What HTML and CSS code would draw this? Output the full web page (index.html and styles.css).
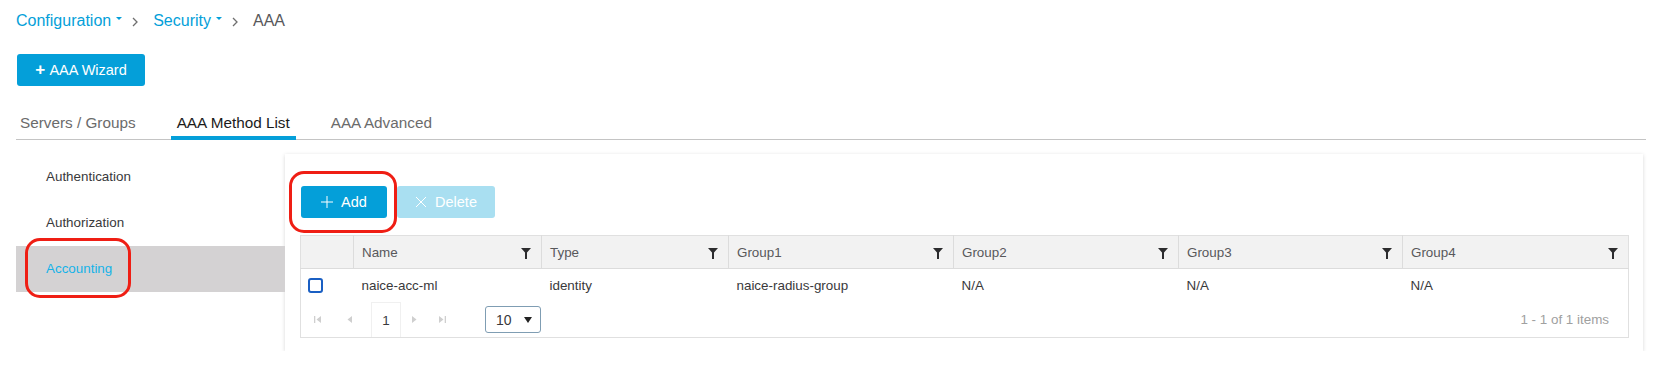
FILE: index.html
```html
<!DOCTYPE html>
<html lang="en">
<head>
	<meta charset="utf-8">
	<meta name="viewport" content="width=device-width, initial-scale=1.0">
	<link rel="stylesheet" href="styles.css">
</head>
<body>
	<div class="page">
		<div class="breadcrumb">
			<a class="crumb">Configuration<span class="caret"></span></a>
			<svg class="sep" viewBox="0 0 6 10"><path d="M1 1L5 5L1 9"/></svg>
			<a class="crumb">Security<span class="caret"></span></a>
			<svg class="sep" viewBox="0 0 6 10"><path d="M1 1L5 5L1 9"/></svg>
			<span class="current">AAA</span>
		</div>

		<button class="wizard-btn"><b>+</b> AAA Wizard</button>

		<div class="tabs">
			<div class="tab">Servers / Groups</div>
			<div class="tab active">AAA Method List</div>
			<div class="tab">AAA Advanced</div>
		</div>

		<div class="content">
			<div class="side-nav">
				<div class="nav-item">Authentication</div>
				<div class="nav-item">Authorization</div>
				<div class="nav-item selected">Accounting<span class="mark mark-nav"></span></div>
			</div>

			<div class="panel">
				<div class="toolbar">
					<button class="btn btn-add">
						<svg class="btn-icon" viewBox="0 0 12 12"><path d="M6 0V12M0 6H12" stroke="#fff" stroke-width="1"/></svg>
						Add
						<span class="mark mark-add"></span>
					</button>
					<button class="btn btn-delete">
						<svg class="btn-icon" viewBox="0 0 12 12"><path d="M1 1L11 11M11 1L1 11" stroke="#fff" stroke-width="1"/></svg>
						Delete
					</button>
				</div>

				<table class="grid">
					<colgroup>
						<col style="width:53px">
						<col style="width:188px">
						<col style="width:187px">
						<col style="width:225px">
						<col style="width:225px">
						<col style="width:224px">
						<col style="width:226px">
					</colgroup>
					<thead>
						<tr>
							<th></th>
							<th>Name<svg class="funnel" viewBox="0 0 10 11"><path d="M0 0H10L6 4.5V11H4V4.5Z"/></svg></th>
							<th>Type<svg class="funnel" viewBox="0 0 10 11"><path d="M0 0H10L6 4.5V11H4V4.5Z"/></svg></th>
							<th>Group1<svg class="funnel" viewBox="0 0 10 11"><path d="M0 0H10L6 4.5V11H4V4.5Z"/></svg></th>
							<th>Group2<svg class="funnel" viewBox="0 0 10 11"><path d="M0 0H10L6 4.5V11H4V4.5Z"/></svg></th>
							<th>Group3<svg class="funnel" viewBox="0 0 10 11"><path d="M0 0H10L6 4.5V11H4V4.5Z"/></svg></th>
							<th>Group4<svg class="funnel" viewBox="0 0 10 11"><path d="M0 0H10L6 4.5V11H4V4.5Z"/></svg></th>
						</tr>
					</thead>
					<tbody>
						<tr>
							<td><span class="check"></span></td>
							<td>naice-acc-ml</td>
							<td>identity</td>
							<td>naice-radius-group</td>
							<td>N/A</td>
							<td>N/A</td>
							<td>N/A</td>
						</tr>
					</tbody>
					<tfoot>
						<tr>
							<td colspan="7">
								<div class="pager">
									<svg class="pg-icon pg-first" viewBox="0 0 7 7"><path d="M0 0H1.3V7H0ZM7 0V7L2.5 3.5Z"/></svg>
									<svg class="pg-icon pg-prev" viewBox="0 0 7 7"><path d="M6 0V7L1.5 3.5Z"/></svg>
									<span class="pg-num">1</span>
									<svg class="pg-icon pg-next" viewBox="0 0 7 7"><path d="M1 0V7L5.5 3.5Z"/></svg>
									<svg class="pg-icon pg-last" viewBox="0 0 7 7"><path d="M0 0V7L4.5 3.5ZM5.7 0H7V7H5.7Z"/></svg>
									<div class="pg-size">10<span class="pg-arrow"></span></div>
									<span class="pg-info">1 - 1 of 1 items</span>
								</div>
							</td>
						</tr>
					</tfoot>
				</table>
			</div>
		</div>
	</div>
</body>
</html>
```

FILE: styles.css
```css
body {
	margin: 0;
	background: #fff;
	font-family: "Liberation Sans", Arial, sans-serif;
	color: #39393b;
}
.page {
	padding: 12px 13px 0 16px;
}
.breadcrumb {
	display: flex;
	align-items: center;
	height: 18px;
	font-size: 16px;
	line-height: 18px;
}
.crumb {
	color: #049fd9;
	display: flex;
	align-items: center;
}
.caret {
	display: inline-block;
	width: 0;
	height: 0;
	margin: 0 0 6px 5px;
	border-left: 3px solid transparent;
	border-right: 3px solid transparent;
	border-top: 3px solid #049fd9;
}
.sep {
	width: 6px;
	height: 10px;
	margin: 1px 15px 0 10px;
	fill: none;
	stroke: #6f6f6f;
	stroke-width: 1.3;
}
.current {
	color: #58585b;
}
.wizard-btn {
	display: block;
	margin: 24px 0 0 1px;
	width: 128px;
	height: 32px;
	border: 0;
	border-radius: 3px;
	background: #049fd9;
	color: #fff;
	font-family: inherit;
	font-size: 14.5px;
	padding: 0;
}
.wizard-btn b {
	font-size: 17px;
	margin-right: 1px;
}
.tabs {
	display: flex;
	gap: 30px;
	margin-top: 29px;
	border-bottom: 1px solid #c4c4c4;
}
.tab {
	padding: 0 5px 5px;
	font-size: 15.3px;
	line-height: 16px;
	color: #6b6b6b;
	border-bottom: 4px solid transparent;
	margin-bottom: -1px;
}
.tab:first-child {
	padding-left: 4px;
}
.tab.active {
	padding: 0 6px 5px;
	color: #1b1b1b;
	border-bottom-color: #049fd9;
}
.content {
	display: flex;
	margin-top: 14px;
}
.side-nav {
	width: 269px;
	flex-shrink: 0;
}
.nav-item {
	position: relative;
	height: 46px;
	line-height: 46px;
	padding-left: 30px;
	font-size: 13.4px;
	color: #39393b;
}
.nav-item.selected {
	background: #d4d2d3;
	color: #16b3e8;
}
.mark {
	position: absolute;
	border: 3.5px solid #ef1e14;
	border-radius: 15px;
	pointer-events: none;
}
.mark-nav {
	left: 9px;
	top: -8px;
	width: 100px;
	height: 54px;
}
.panel {
	width: 1358px;
	height: 197px;
	background: #fff;
	box-shadow: 0 1px 4px rgba(0, 0, 0, 0.16);
	padding: 32px 15px 0 15px;
	box-sizing: border-box;
}
.toolbar {
	display: flex;
	gap: 10px;
	padding-left: 1px;
}
.btn {
	position: relative;
	height: 32px;
	border: 0;
	border-radius: 3px;
	color: #fff;
	font-family: inherit;
	font-size: 14.5px;
	display: flex;
	align-items: center;
	justify-content: center;
	gap: 8px;
	padding: 0;
}
.btn-icon {
	width: 12px;
	height: 12px;
}
.btn-add {
	width: 86px;
	background: #049fd9;
}
.btn-delete {
	width: 98px;
	background: #a9dff1;
}
.mark-add {
	left: -12px;
	top: -15px;
	width: 102px;
	height: 56px;
}
.grid {
	margin-top: 17px;
	width: 1328px;
	table-layout: fixed;
	border-collapse: collapse;
	border: 1px solid #e0e0e0;
	font-size: 13.4px;
}
.grid th {
	position: relative;
	height: 32px;
	background: #f2f2f2;
	border-left: 1px solid #dcdcdc;
	border-bottom: 1px solid #dcdcdc;
	text-align: left;
	font-weight: normal;
	color: #58585b;
	padding: 0 8px;
}
.grid th:first-child {
	border-left: 0;
}
.funnel {
	position: absolute;
	right: 10px;
	top: 12px;
	width: 10px;
	height: 11px;
	fill: #2c2c2e;
}
.grid td {
	height: 33px;
	padding: 0 8px;
	color: #39393b;
}
.check {
	display: block;
	width: 11px;
	height: 11px;
	margin-left: -1px;
	border: 2px solid #1a5fc3;
	border-radius: 3px;
}
.grid tfoot td {
	height: 35px;
	padding: 0;
}
.pager {
	display: flex;
	align-items: center;
	height: 35px;
	padding-left: 13px;
}
.pg-icon {
	width: 7px;
	height: 7px;
	fill: #cfcfcf;
}
.pg-first {
	margin-right: 25px;
}
.pg-prev {
	margin-right: 18px;
}
.pg-next {
	margin-right: 21px;
}
.pg-last {
	margin-right: 39px;
}
.pg-num {
	width: 30px;
	height: 35px;
	line-height: 35px;
	text-align: center;
	box-sizing: border-box;
	border: 1px solid #f0f0f0;
	border-bottom: 0;
	margin-right: 10px;
	color: #39393b;
}
.pg-size {
	display: flex;
	align-items: center;
	width: 56px;
	height: 27px;
	box-sizing: border-box;
	border: 1px solid #7f9db3;
	border-radius: 3px;
	padding-left: 10px;
	font-size: 14px;
}
.pg-arrow {
	margin-left: 12px;
	border-left: 4px solid transparent;
	border-right: 4px solid transparent;
	border-top: 6px solid #222;
}
.pg-info {
	margin-left: auto;
	margin-right: 19px;
	color: #a0a0a0;
}
```
